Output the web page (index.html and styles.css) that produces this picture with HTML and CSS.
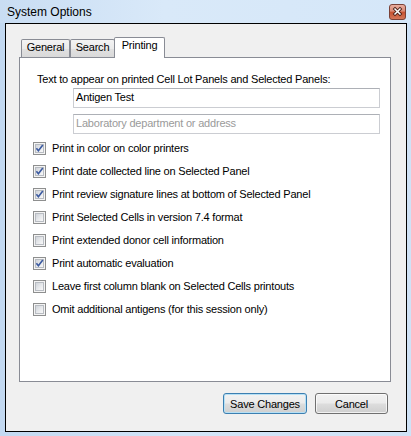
FILE: index.html
```html
<!DOCTYPE html>
<html>
<head>
<meta charset="utf-8">
<title>System Options</title>
<link rel="stylesheet" href="styles.css">
</head>
<body>
<div class="window">
  <div class="titlebar">
    <span class="title">System Options</span>
    <span class="close">
      <svg width="17" height="16" viewBox="0 0 17 16">
        <defs>
          <linearGradient id="closeGrad" x1="0" y1="0" x2="0" y2="1">
            <stop offset="0" stop-color="#eab0a2"/>
            <stop offset="0.45" stop-color="#d98a76"/>
            <stop offset="0.5" stop-color="#c5502f"/>
            <stop offset="1" stop-color="#d67a5c"/>
          </linearGradient>
        </defs>
        <rect x="0.5" y="0.5" width="16" height="15" rx="2.5" fill="url(#closeGrad)" stroke="#7a4238"/>
        <path d="M6 5 L11 10 M11 5 L6 10" stroke="#4a2018" stroke-width="3.2" stroke-linecap="square"/>
        <path d="M6 5 L11 10 M11 5 L6 10" stroke="#ffffff" stroke-width="1.5" stroke-linecap="square"/>
      </svg>
    </span>
  </div>
  <div class="client">
    <div class="tabs">
      <div class="tab tab-general">General</div>
      <div class="tab tab-search">Search</div>
      <div class="tab tab-printing selected">Printing</div>
    </div>
    <div class="panel">
      <div class="caption">Text to appear on printed Cell Lot Panels and Selected Panels:</div>
      <div class="field">Antigen Test</div>
      <div class="field field-second placeholder">Laboratory department or address</div>
      <ul class="options">
        <li class="option"><span class="check"><span class="box"><svg class="mark" width="9" height="9" viewBox="0 0 9 9"><path d="M1.4 4.2 L3.4 6.8 L7.8 0.9" fill="none" stroke="#3b5aa0" stroke-width="1.6"/></svg></span></span>Print in color on color printers</li>
        <li class="option"><span class="check"><span class="box"><svg class="mark" width="9" height="9" viewBox="0 0 9 9"><path d="M1.4 4.2 L3.4 6.8 L7.8 0.9" fill="none" stroke="#3b5aa0" stroke-width="1.6"/></svg></span></span>Print date collected line on Selected Panel</li>
        <li class="option"><span class="check"><span class="box"><svg class="mark" width="9" height="9" viewBox="0 0 9 9"><path d="M1.4 4.2 L3.4 6.8 L7.8 0.9" fill="none" stroke="#3b5aa0" stroke-width="1.6"/></svg></span></span>Print review signature lines at bottom of Selected Panel</li>
        <li class="option"><span class="check"><span class="box"></span></span>Print Selected Cells in version 7.4 format</li>
        <li class="option"><span class="check"><span class="box"></span></span>Print extended donor cell information</li>
        <li class="option"><span class="check"><span class="box"><svg class="mark" width="9" height="9" viewBox="0 0 9 9"><path d="M1.4 4.2 L3.4 6.8 L7.8 0.9" fill="none" stroke="#3b5aa0" stroke-width="1.6"/></svg></span></span>Print automatic evaluation</li>
        <li class="option"><span class="check"><span class="box"></span></span>Leave first column blank on Selected Cells printouts</li>
        <li class="option"><span class="check"><span class="box"></span></span>Omit additional antigens (for this session only)</li>
      </ul>
    </div>
    <div class="buttons">
      <button class="btn btn-save default">Save Changes</button>
      <button class="btn btn-cancel">Cancel</button>
    </div>
  </div>
</div>
</body>
</html>
```

FILE: styles.css
```css
html, body {
  margin: 0;
  padding: 0;
}

body {
  width: 411px;
  height: 436px;
  overflow: hidden;
  background: #c6dbf2;
  font-family: "Liberation Sans", Arial, sans-serif;
  color: #000;
}

.window {
  width: 411px;
  height: 436px;
  box-sizing: border-box;
  display: flex;
  flex-direction: column;
  background: linear-gradient(90deg, #c3d9f1 0%, #d3e5f8 45%, #cfe2f6 100%);
}

.titlebar {
  height: 23px;
  flex: none;
  display: flex;
  justify-content: space-between;
  align-items: flex-start;
  padding-left: 7px;
  box-sizing: border-box;
  background: linear-gradient(90deg, #c9ddf3 0%, #d9e9f9 40%, #d5e7f9 100%);
}

.title {
  font-size: 12px;
  line-height: 14px;
  margin-top: 5px;
}

.close {
  width: 17px;
  height: 16px;
  margin: 4px 5px 0 0;
}

.close svg {
  display: block;
}

.client {
  flex: 1;
  margin: 0 4px 4px 5px;
  border: 1px solid #000;
  background: #f0f0f0;
  padding: 13px 15px 0 13px;
  display: flex;
  flex-direction: column;
}

.tabs {
  display: flex;
  align-items: flex-end;
  height: 20px;
  padding-left: 2px;
  position: relative;
  z-index: 1;
}

.tab {
  height: 18px;
  box-sizing: border-box;
  border: 1px solid #898c95;
  border-bottom: none;
  background: linear-gradient(#f3f3f3 0%, #ebebeb 50%, #e1e1e1 51%, #d9d9d9 100%);
  font-size: 11px;
  line-height: 14px;
  letter-spacing: -0.2px;
  text-align: center;
  border-radius: 2px 2px 0 0;
}

.tab-general {
  width: 49px;
}

.tab-search {
  width: 45px;
}

.tab-printing {
  width: 51px;
  margin-left: -1px;
}

.tab.selected {
  height: 21px;
  margin-bottom: -1px;
  background: #fff;
}

.panel {
  height: 325px;
  box-sizing: border-box;
  background: #fff;
  border: 1px solid #898c95;
  padding: 15px 10px 0 13px;
  font-size: 11px;
  letter-spacing: -0.2px;
}

.caption {
  line-height: 13px;
  margin-left: 4px;
}

.field {
  width: 307px;
  height: 20px;
  box-sizing: border-box;
  margin: 2px 0 0 40px;
  border: 1px solid #cbcdd2;
  border-top-color: #adb0b6;
  padding-left: 2px;
  line-height: 16px;
}

.field-second {
  margin-top: 6px;
}

.placeholder {
  color: #9a9a9a;
}

.options {
  list-style: none;
  margin: 8px 0 0 0;
  padding: 0;
  display: flex;
  flex-direction: column;
  gap: 10px;
}

.option {
  display: flex;
  align-items: center;
  height: 13px;
  line-height: 13px;
}

.check {
  flex: none;
  width: 13px;
  height: 13px;
  box-sizing: border-box;
  border: 1px solid #8e8f8f;
  background: #f4f4f4;
  padding: 1px;
  margin-right: 6px;
}

.box {
  display: block;
  width: 9px;
  height: 9px;
  box-sizing: border-box;
  border: 1px solid #b8bcc2;
  background: linear-gradient(135deg, #d0d4da 0%, #e6e8eb 50%, #f8f8f8 100%);
}

.mark {
  display: block;
  margin: -1px;
}

.buttons {
  display: flex;
  justify-content: flex-end;
  gap: 8px;
  margin-top: 11px;
  padding-right: 3px;
}

.btn {
  height: 21px;
  box-sizing: border-box;
  padding: 0;
  border: 1px solid #707070;
  border-radius: 3px;
  background: linear-gradient(#f2f2f2 0%, #ebebeb 48%, #dddddd 52%, #cfcfcf 100%);
  box-shadow: inset 0 0 0 1px rgba(255, 255, 255, 0.7);
  font-family: "Liberation Sans", Arial, sans-serif;
  font-size: 11px;
  letter-spacing: -0.2px;
  color: #000;
}

.btn-save {
  width: 84px;
}

.btn-cancel {
  width: 73px;
}

.btn.default {
  border-color: #3c7fb1;
  box-shadow: inset 0 0 0 1px #b6e0f5;
}
```
